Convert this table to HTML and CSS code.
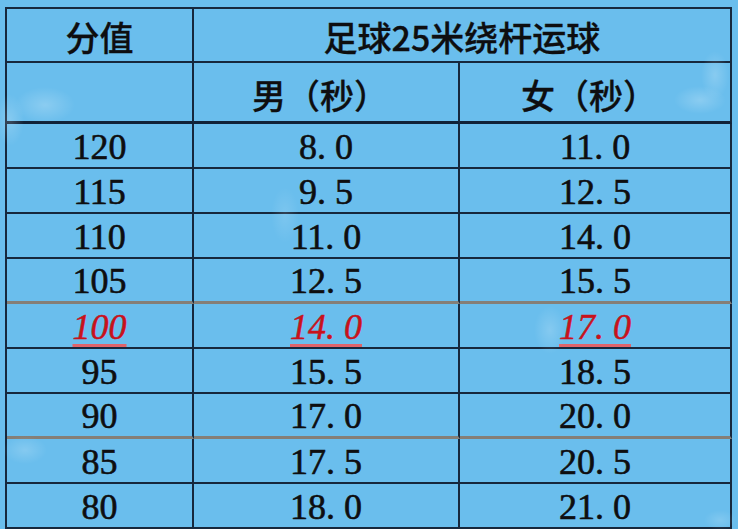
FILE: index.html
```
<!DOCTYPE html>
<html lang="zh-CN">
<head>
<meta charset="utf-8">
<title>足球25米绕杆运球</title>
<link rel="stylesheet" href="styles.css">
</head>
<body>
<div class="sheet">
  <div class="grid">
    <div class="cell head">分值</div>
    <div class="cell head span2">足球25米绕杆运球</div>
    <div class="cell head sub"></div>
    <div class="cell head sub shift">男（秒）</div>
    <div class="cell head sub shift">女（秒）</div>

    <div class="cell num">120</div><div class="cell num">8<span class="pt">.</span>0</div><div class="cell num">11<span class="pt">.</span>0</div>
    <div class="cell num">115</div><div class="cell num">9<span class="pt">.</span>5</div><div class="cell num">12<span class="pt">.</span>5</div>
    <div class="cell num">110</div><div class="cell num">11<span class="pt">.</span>0</div><div class="cell num">14<span class="pt">.</span>0</div>
    <div class="cell num grey">105</div><div class="cell num grey">12<span class="pt">.</span>5</div><div class="cell num grey">15<span class="pt">.</span>5</div>
    <div class="cell num"><span class="mark">100</span></div><div class="cell num"><span class="mark">14<span class="pt">.</span>0</span></div><div class="cell num"><span class="mark">17<span class="pt">.</span>0</span></div>
    <div class="cell num">95</div><div class="cell num">15<span class="pt">.</span>5</div><div class="cell num">18<span class="pt">.</span>5</div>
    <div class="cell num grey">90</div><div class="cell num grey">17<span class="pt">.</span>0</div><div class="cell num grey">20<span class="pt">.</span>0</div>
    <div class="cell num">85</div><div class="cell num">17<span class="pt">.</span>5</div><div class="cell num">20<span class="pt">.</span>5</div>
    <div class="cell num">80</div><div class="cell num">18<span class="pt">.</span>0</div><div class="cell num">21<span class="pt">.</span>0</div>
  </div>
  <div class="leaves" aria-hidden="true"></div>
</div>
</body>
</html>
```
FILE: styles.css
```
html, body {
  margin: 0;
  padding: 0;
  background: #6abeed;
  overflow: hidden;
}

.sheet {
  position: relative;
  width: 738px;
  height: 529px;
  padding: 7px 0 0 5px;
  box-sizing: border-box;
}

.grid {
  display: grid;
  grid-template-columns: 187px 266px 272px;
  grid-template-rows: 54px 61px repeat(9, 45px);
  border-left: 2px solid #16283d;
  border-top: 2px solid #16283d;
  width: max-content;
}

.cell {
  box-sizing: border-box;
  border-right: 2px solid #16283d;
  border-bottom: 2px solid #16283d;
  display: flex;
  align-items: center;
  justify-content: center;
  color: #0e0e10;
}

.head {
  font-family: "Noto Sans CJK SC", "Noto Sans", sans-serif;
  font-size: 34px;
  font-weight: 500;
  padding-top: 2px;
  -webkit-text-stroke: 0.3px #0e0e10;
}

.span2 {
  grid-column: span 2;
}

.sub {
  border-bottom: 3px solid #102238;
  padding-top: 4px;
}

.shift {
  padding-right: 12px;
}

.num {
  font-family: "Liberation Serif", "Times New Roman", serif;
  font-size: 36px;
  padding-top: 2px;
  -webkit-text-stroke: 0.6px #0e0e10;
}

.pt {
  letter-spacing: 9px;
}

.grey {
  border-bottom: 3px solid #857f77;
}

.mark {
  color: #c8121c;
  -webkit-text-stroke: 0.5px #c8121c;
  font-style: italic;
  text-decoration: underline;
  text-decoration-color: #e0646a;
  text-decoration-thickness: 3px;
  text-underline-offset: 5px;
}

.leaves {
  position: absolute;
  inset: 0;
  pointer-events: none;
  background:
    radial-gradient(ellipse 30px 18px at 45px 105px, rgba(255,255,255,0.22), rgba(255,255,255,0) 100%),
    radial-gradient(ellipse 14px 26px at 10px 120px, rgba(255,255,255,0.18), rgba(255,255,255,0) 100%),
    radial-gradient(ellipse 26px 14px at 700px 100px, rgba(255,255,255,0.22), rgba(255,255,255,0) 100%),
    radial-gradient(ellipse 14px 24px at 715px 75px, rgba(255,255,255,0.2), rgba(255,255,255,0) 100%),
    radial-gradient(ellipse 16px 24px at 550px 330px, rgba(255,255,255,0.18), rgba(255,255,255,0) 100%),
    radial-gradient(ellipse 14px 28px at 285px 215px, rgba(255,255,255,0.12), rgba(255,255,255,0) 100%),
    radial-gradient(ellipse 22px 14px at 25px 450px, rgba(255,255,255,0.18), rgba(255,255,255,0) 100%),
    radial-gradient(ellipse 16px 10px at 720px 520px, rgba(255,255,255,0.15), rgba(255,255,255,0) 100%);
}
```
